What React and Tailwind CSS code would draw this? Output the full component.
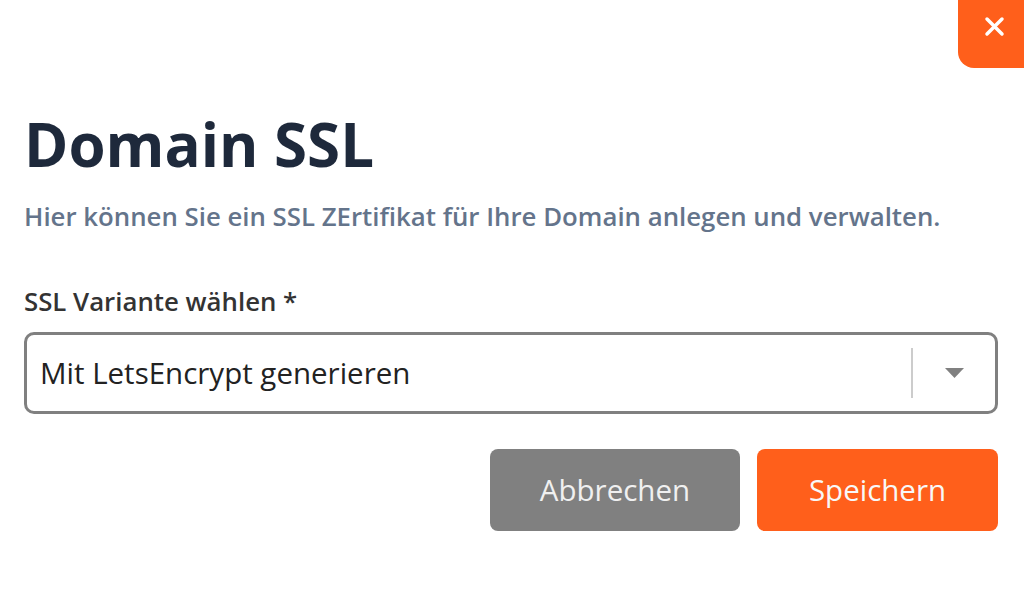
export default function App() {
  return (
    <div className="relative w-[1024px] h-[598px] bg-white overflow-hidden" style={{ fontFamily: "'Open Sans', 'Noto Sans', sans-serif" }}>
      <button className="absolute top-0 right-0 w-[66px] h-[68px] bg-[#ff5f1b] rounded-bl-[16px] flex items-start justify-center pt-[16px] pl-[6px]">
        <svg width="21" height="21" viewBox="0 0 21 21" fill="none" stroke="white" strokeWidth="3.5" strokeLinecap="round">
          <path d="M3 3 L18 18 M18 3 L3 18" />
        </svg>
      </button>
      <div className="flex flex-col pl-6 pr-[26px] pt-[106px]">
        <h1 className="text-[60px] leading-[76px] font-bold text-[#1e293b]">Domain SSL</h1>
        <p className="mt-[20px] text-[25.8px] leading-[28px] font-semibold text-[#64748b] whitespace-nowrap">Hier können Sie ein SSL ZErtifikat für Ihre Domain anlegen und verwalten.</p>
        <label className="mt-[57px] text-[25.8px] leading-[28px] font-semibold text-[#333]">SSL Variante wählen *</label>
        <div className="mt-[17px] h-[82px] border-[3px] border-[#808080] rounded-[10px] flex items-center pl-[13px]">
          <span className="flex-1 text-[29.5px] text-[#222]">Mit LetsEncrypt generieren</span>
          <div className="w-[2px] h-[50px] bg-[#ccc]" />
          <div className="w-[82px] flex items-center justify-center">
            <svg width="19" height="10" viewBox="0 0 19 10"><path d="M0 0 L19 0 L9.5 10 Z" fill="#808080" /></svg>
          </div>
        </div>
        <div className="mt-[35px] flex justify-end gap-[17px]">
          <button className="w-[250px] h-[82px] bg-[#808080] rounded-[8px] text-[29.5px] text-[#f0f0f0]">Abbrechen</button>
          <button className="w-[241px] h-[82px] bg-[#ff5f1b] rounded-[8px] text-[29.5px] text-[#f8f8f8]">Speichern</button>
        </div>
      </div>
    </div>
  );
}
